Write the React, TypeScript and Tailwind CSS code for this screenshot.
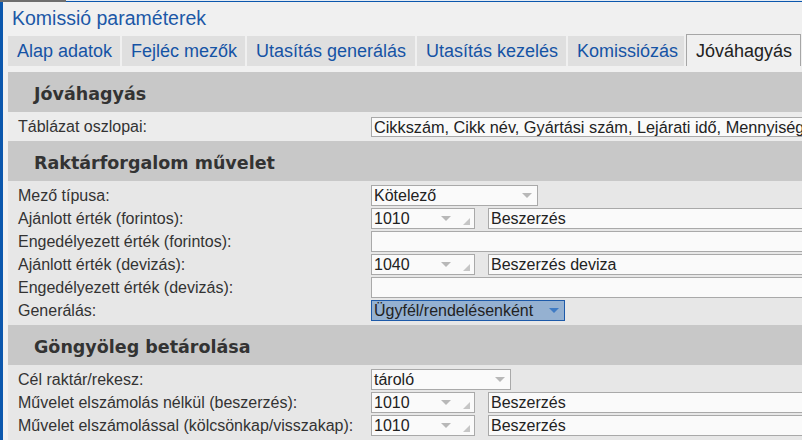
import React from "react";

const Arrow = ({ color = "#b8b8b8" }: { color?: string }) => (
  <svg width="10" height="5" viewBox="0 0 10 5" className="shrink-0">
    <polygon points="0,0 10,0 5,5" fill={color} />
  </svg>
);

const Grip = () => (
  <svg width="7" height="7" viewBox="0 0 7 7" className="shrink-0">
    <polygon points="7,0 7,7 0,7" fill="#c6c6c6" />
  </svg>
);

const Select = ({ text, width, active }: { text: string; width: string; active?: boolean }) => (
  <div
    className={`${width} h-[21px] flex items-center pl-[2px] pr-[5px] border ${
      active ? "border-[#1d5aa9] bg-[#95b1d1]" : "border-[#a9a9a9] bg-[#fafafa]"
    }`}
  >
    <span className="flex-1 text-[16px] leading-[19px] text-[#222] whitespace-nowrap">{text}</span>
    <Arrow color={active ? "#3f7bc4" : "#b8b8b8"} />
  </div>
);

const Combo = ({ code }: { code: string }) => (
  <div className="w-[104px] h-[21px] flex items-center pl-[2px] border border-[#a9a9a9] bg-[#fafafa] shrink-0">
    <span className="w-[67px] text-[16px] leading-[19px] text-[#222]">{code}</span>
    <Arrow />
    <div className="ml-[12px] mt-[5px]">
      <Grip />
    </div>
  </div>
);

const TextBox = ({ text, width = "w-[520px]" }: { text?: string; width?: string }) => (
  <div className={`${width} h-[21px] shrink-0 flex items-center pl-[2px] border border-[#a9a9a9] bg-[#fafafa] overflow-hidden`}>
    <span className="text-[16px] leading-[19px] text-[#222] whitespace-nowrap">{text}</span>
  </div>
);

const Row = ({ label, children }: { label: string; children: React.ReactNode }) => (
  <div className="h-[23px] flex items-start">
    <div className="w-[363px] shrink-0 pl-[10px] h-[21px] flex items-center text-[16px] text-[#333] whitespace-nowrap">
      {label}
    </div>
    <div className="flex items-start gap-[13px]">{children}</div>
  </div>
);

const Header = ({ title }: { title: string }) => (
  <div className="h-[40px] bg-[#c8c8c8] pl-[26px] pt-[4px] leading-[36px] text-[17.5px] font-bold text-[#333] font-['DejaVu_Sans',Verdana,sans-serif] whitespace-nowrap">
    {title}
  </div>
);

const tabs = [
  { t: "Alap adatok", w: "w-[112px]" },
  { t: "Fejléc mezők", w: "w-[123px]" },
  { t: "Utasítás generálás", w: "w-[168px]" },
  { t: "Utasítás kezelés", w: "w-[149px]" },
  { t: "Komissiózás", w: "w-[116px]" },
];

export default function App() {
  return (
    <div className="w-[802px] h-[440px] overflow-hidden bg-[#f0f0f0] flex flex-col font-['Liberation_Sans',Arial,sans-serif]">
      <div className="h-[2px] flex shrink-0">
        <div className="w-[66px] bg-[#6e6e6e]" />
        <div className="flex-1 bg-[#0b57ad] border-t border-[#e4ebf4]" />
      </div>
      <div className="flex flex-1 min-h-0">
        <div className="w-[3px] bg-[#0b57ad] shrink-0" />
        <div className="flex-1 flex flex-col min-w-0 overflow-hidden">
          <div className="h-[32px] shrink-0 pl-[9px] text-[19.5px] leading-[32px] text-[#1c58a7] whitespace-nowrap">
            Komissió paraméterek
          </div>
          <div className="h-[32px] shrink-0 pl-[5px] flex items-end gap-[2px]">
            {tabs.map((tab) => (
              <div
                key={tab.t}
                className={`${tab.w} h-[30px] shrink-0 bg-[#dfdfdf] pl-[9px] pt-[1px] leading-[29px] text-[18px] text-[#1553a5] whitespace-nowrap`}
              >
                {tab.t}
              </div>
            ))}
            <div className="w-[115px] h-[32px] shrink-0 border border-b-0 border-[#a6a6a6] bg-[#f0f0f0] pl-[9px] pt-[1px] leading-[31px] text-[18px] text-[#222] whitespace-nowrap">
              Jóváhagyás
            </div>
          </div>
          <div className="h-[6px] shrink-0" />
          <div className="ml-[5px] flex flex-col overflow-hidden">
            <Header title="Jóváhagyás" />
            <div className="h-[29px] bg-[#ececec] flex items-center">
              <div className="w-[363px] shrink-0 pl-[10px] text-[16px] text-[#333] whitespace-nowrap">
                Táblázat oszlopai:
              </div>
              <div className="w-[520px] h-[20px] shrink-0 flex items-center pl-[2px] border border-[#a9a9a9] bg-[#fafafa] overflow-hidden">
                <span className="text-[16.3px] leading-[18px] text-[#222] whitespace-nowrap">
                  Cikkszám, Cikk név, Gyártási szám, Lejárati idő, Mennyiség
                </span>
              </div>
            </div>
            <Header title="Raktárforgalom művelet" />
            <div className="bg-[#e7e7e7] pt-[4px] pb-[2px]">
              <Row label="Mező típusa:">
                <Select text="Kötelező" width="w-[167px]" />
              </Row>
              <Row label="Ajánlott érték (forintos):">
                <Combo code="1010" />
                <TextBox text="Beszerzés" />
              </Row>
              <Row label="Engedélyezett érték (forintos):">
                <TextBox />
              </Row>
              <Row label="Ajánlott érték (devizás):">
                <Combo code="1040" />
                <TextBox text="Beszerzés deviza" />
              </Row>
              <Row label="Engedélyezett érték (devizás):">
                <TextBox />
              </Row>
              <Row label="Generálás:">
                <Select text="Ügyfél/rendelésenként" width="w-[194px]" active />
              </Row>
            </div>
            <Header title="Göngyöleg betárolása" />
            <div className="bg-[#e7e7e7] pt-[4px] pb-[2px]">
              <Row label="Cél raktár/rekesz:">
                <Select text="tároló" width="w-[140px]" />
              </Row>
              <Row label="Művelet elszámolás nélkül (beszerzés):">
                <Combo code="1010" />
                <TextBox text="Beszerzés" />
              </Row>
              <Row label="Művelet elszámolással (kölcsönkap/visszakap):">
                <Combo code="1010" />
                <TextBox text="Beszerzés" />
              </Row>
            </div>
          </div>
        </div>
      </div>
    </div>
  );
}
